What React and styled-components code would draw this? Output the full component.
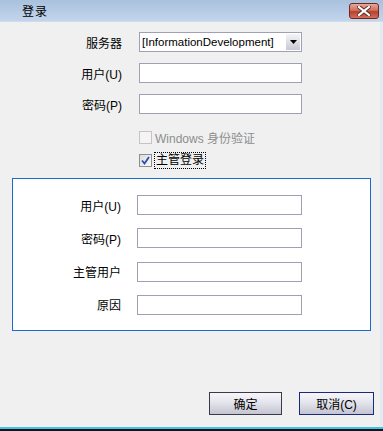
import { createGlobalStyle, styled } from "styled-components";

const GlobalStyle = createGlobalStyle`
    html, body {
        margin: 0;
        padding: 0;
        background: #f0f0f0;
    }
    body {
        font-family: "Liberation Sans", "Noto Sans CJK SC", sans-serif;
        font-size: 12px;
        color: #000;
    }
`;

function CloseIcon() {
    return (
        <svg width="14" height="10" viewBox="0 0 14 10">
            <path d="M2 1 L12 9 M12 1 L2 9" stroke="#5a2a22" strokeWidth="4" strokeLinecap="square" />
            <path d="M2 1 L12 9 M12 1 L2 9" stroke="#ffffff" strokeWidth="2.2" strokeLinecap="square" />
        </svg>
    );
}

function CheckBox({ checked, disabled }) {
    return (
        <Box $disabled={disabled}>
            {checked && (
                <svg width="9" height="9" viewBox="0 0 9 9">
                    <path d="M1 4.5 L3.5 7.5 L8 1" fill="none" stroke="#2a4fa8" strokeWidth="1.8" />
                </svg>
            )}
        </Box>
    );
}

function Field({ label }) {
    return (
        <>
            <Label>{label}</Label>
            <Input />
        </>
    );
}

export default function App() {
    return (
        <Window>
            <GlobalStyle />
            <TitleBar>
                <Title>登录</Title>
                <CloseButton>
                    <CloseIcon />
                </CloseButton>
            </TitleBar>
            <Body>
                <TopForm>
                    <Label>服务器</Label>
                    <Select>
                        <SelectText>[InformationDevelopment]</SelectText>
                        <Arrow>
                            <svg width="7" height="4" viewBox="0 0 7 4">
                                <path d="M0 0 H7 L3.5 4 Z" fill="#000" />
                            </svg>
                        </Arrow>
                    </Select>
                    <Field label="用户(U)" />
                    <Field label="密码(P)" />
                </TopForm>
                <Checks>
                    <CheckRow $disabled>
                        <CheckBox disabled />
                        <span>Windows 身份验证</span>
                    </CheckRow>
                    <CheckRow>
                        <CheckBox checked />
                        <Focus>主管登录</Focus>
                    </CheckRow>
                </Checks>
                <Group>
                    <GroupForm>
                        <Field label="用户(U)" />
                        <Field label="密码(P)" />
                        <Field label="主管用户" />
                        <Field label="原因" />
                    </GroupForm>
                </Group>
                <Buttons>
                    <Button>确定</Button>
                    <Button $default>取消(C)</Button>
                </Buttons>
            </Body>
            <BottomEdge />
        </Window>
    );
}

const Window = styled.div`
    width: 383px;
    height: 431px;
    display: flex;
    flex-direction: column;
    background: #f0f0f0;
    overflow: hidden;
`;

const TitleBar = styled.div`
    height: 22px;
    flex: none;
    display: flex;
    align-items: center;
    justify-content: space-between;
    padding: 0 4px 0 22px;
    background: linear-gradient(#a9c1de, #c2d5ec);
    border-bottom: 1px solid #cfdcec;
    box-sizing: border-box;
`;

const Title = styled.div`
    font-size: 12px;
    letter-spacing: 1px;
    color: #000;
`;

const CloseButton = styled.div`
    width: 30px;
    height: 16px;
    margin-top: 1px;
    box-sizing: border-box;
    border: 1px solid #6e2a20;
    border-radius: 3px;
    display: flex;
    align-items: center;
    justify-content: center;
    background: linear-gradient(#e8a898 0%, #d07060 45%, #b8402c 55%, #d0705c 100%);
`;

const Body = styled.div`
    flex: 1;
    display: flex;
    flex-direction: column;
    border-right: 3px solid #e2eaf3;
    padding-top: 10px;
`;

const TopForm = styled.div`
    display: grid;
    grid-template-columns: 122px 163px;
    grid-auto-rows: 20px;
    column-gap: 17px;
    row-gap: 11px;
    align-items: center;
`;

const Label = styled.div`
    text-align: right;
    white-space: nowrap;
    font-size: 12px;
`;

const Input = styled.div`
    height: 20px;
    box-sizing: border-box;
    border: 1px solid #a0a0b4;
    background: #fff;
`;

const Select = styled.div`
    height: 20px;
    box-sizing: border-box;
    border: 1px solid #a0a0b4;
    background: #fff;
    display: flex;
    align-items: stretch;
`;

const SelectText = styled.div`
    flex: 1;
    padding-left: 2px;
    font-size: 11.5px;
    line-height: 18px;
    white-space: nowrap;
`;

const Arrow = styled.div`
    width: 14px;
    display: flex;
    align-items: center;
    justify-content: center;
    margin: 1px;
    background: linear-gradient(#f4f4f8, #c8c8d4);
`;

const Checks = styled.div`
    display: flex;
    flex-direction: column;
    gap: 7px;
    margin: 15px 0 0 139px;
`;

const CheckRow = styled.div`
    display: flex;
    align-items: center;
    gap: 3px;
    height: 16px;
    color: ${(p) => (p.$disabled ? "#8d8d8d" : "#000")};
`;

const Box = styled.div`
    width: 13px;
    height: 13px;
    box-sizing: border-box;
    border: 1px solid ${(p) => (p.$disabled ? "#c4c4c4" : "#8e8f8f")};
    background: ${(p) => (p.$disabled ? "#f4f4f4" : "linear-gradient(135deg, #dcdcdc, #f8f8f8)")};
    display: flex;
    align-items: center;
    justify-content: center;
`;

const Focus = styled.span`
    outline: 1px dotted #000;
    padding: 0 1px;
    line-height: 15px;
`;

const Group = styled.div`
    margin: 10px 0 0 12px;
    width: 359px;
    height: 153px;
    box-sizing: border-box;
    border: 1px solid #1a6bd0;
    background: #fff;
    padding-top: 16px;
`;

const GroupForm = styled.div`
    display: grid;
    grid-template-columns: 108px 165px;
    grid-auto-rows: 20px;
    column-gap: 16px;
    row-gap: 13.3px;
    align-items: center;
`;

const Buttons = styled.div`
    margin-top: auto;
    margin-bottom: 12px;
    display: flex;
    justify-content: flex-end;
    gap: 17px;
    padding-right: 6px;
`;

const Button = styled.div`
    width: ${(p) => (p.$default ? "75px" : "73px")};
    height: 23px;
    box-sizing: border-box;
    border: 1px solid ${(p) => (p.$default ? "#1a2a7a" : "#3a3a48")};
    background: linear-gradient(#f6f6fa, #e4e4ec 45%, #c4c4d2);
    display: flex;
    align-items: center;
    justify-content: center;
    font-size: 12px;
`;

const BottomEdge = styled.div`
    height: 4px;
    flex: none;
    background: linear-gradient(#3cc4ec 0 2px, #101418 2px);
`;
